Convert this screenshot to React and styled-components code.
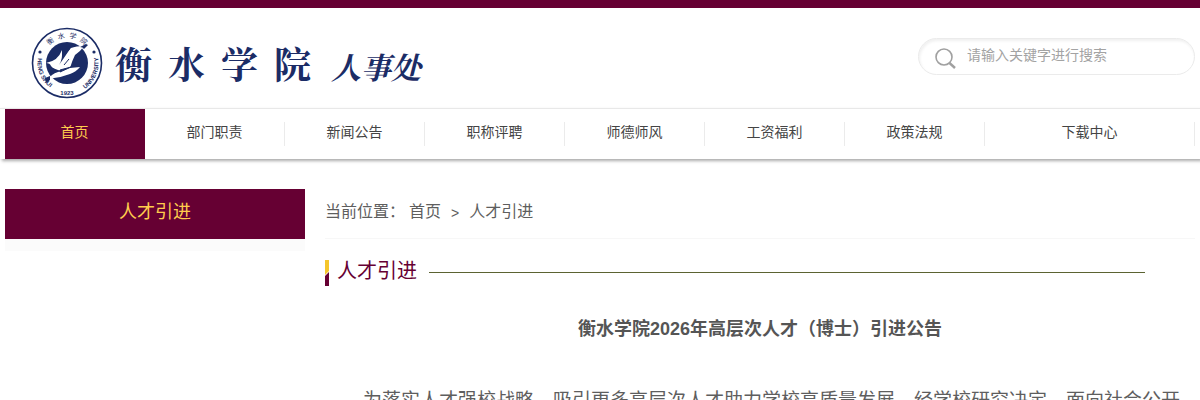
import React from 'react';
import styled, { createGlobalStyle } from 'styled-components';

const GlobalStyle = createGlobalStyle`
  * {
    box-sizing: border-box;
  }

  body {
    margin: 0;
    background: #fff;
    color: #5e5e5e;
    font: 14px/50px "Liberation Sans", "Noto Sans CJK SC", sans-serif;
  }

  a {
    color: inherit;
    text-decoration: none;
  }
`;

const Wrap = styled.div`
  max-width: 1190px;
  margin: 0 auto;
`;

const Header = styled.header`
  border-top: 8px solid #660033;
`;

const HeaderRow = styled(Wrap)`
  display: flex;
  justify-content: space-between;
  height: 100px;
`;

const Brand = styled.a`
  display: flex;
  align-items: center;
  padding: 10px 0 0 24px;
  color: #1b2c66;
  font-family: "Noto Serif CJK SC", "Noto Sans CJK SC", sans-serif;
  font-weight: bold;
`;

const BrandName = styled.span`
  display: flex;
  gap: ${props => (props.$small ? 0 : 16)}px;
  margin-left: ${props => (props.$small ? 20 : 10)}px;
  padding-top: ${props => (props.$small ? 6 : 0)}px;
  font-size: ${props => (props.$small ? 30 : 37)}px;
  font-style: ${props => (props.$small ? 'italic' : 'normal')};
`;

const Search = styled.form`
  display: flex;
  align-items: center;
  gap: 8px;
  width: 277px;
  height: 37px;
  margin-top: 30px;
  padding: 0 14px;
  border: 1px solid #ebebeb;
  border-radius: 19px;
  box-shadow: inset 1px 2px 3px #f0f0f0;
`;

const SearchButton = styled.button`
  display: flex;
  padding: 4px 0 0;
  border: 0;
  background: none;
`;

const SearchInput = styled.input`
  flex: 1;
  min-width: 0;
  height: 34px;
  padding: 0 2px 4px;
  border: 0;
  outline: 0;
  background: none;
  font: 14px "Liberation Sans", "Noto Sans CJK SC", sans-serif;

  &::placeholder {
    color: #a3a3a3;
  }
`;

const Nav = styled.nav`
  border-top: 1px solid #e8e8e8;
  box-shadow: 2px 2px 3px #aaa;
`;

const NavList = styled(Wrap)`
  display: flex;
`;

const NavItem = styled.a`
  display: flex;
  flex: ${props => (props.$wide ? 3 : 2)};
  align-items: center;
  height: 50px;
  background: ${props => (props.$active ? '#660033' : 'none')};
  color: ${props => (props.$active ? '#ffcc4d' : '#444')};

  span {
    flex: 1;
    height: 24px;
    border-right: 1px solid ${props => (props.$active ? '#660033' : '#ebebeb')};
    line-height: 20px;
    text-align: center;
  }
`;

const Main = styled(Wrap)`
  display: flex;
  gap: 20px;
  padding-top: 30px;
`;

const Side = styled.aside`
  flex: 0 0 300px;
`;

const SideTitle = styled.h2`
  margin: 0;
  background: #660033;
  color: #ffcc4d;
  font-size: 18px;
  font-weight: normal;
  line-height: 46px;
  height: 50px;
  text-align: center;
`;

const SideList = styled.div`
  padding: 6px;
  background: #fbfbfb;
`;

const Content = styled.main`
  flex: 1;
  min-width: 0;
`;

const Crumbs = styled.div`
  display: flex;
  height: 50px;
  border-bottom: 1px solid #f7f7f7;
  font-size: 16px;
  line-height: 46px;
`;

const Arrow = styled.span`
  margin: 0 10px;
  font-size: 14px;
  line-height: 48px;
`;

const CrumbLink = styled.a`
  margin-left: ${props => (props.$first ? 4 : 0)}px;
`;

const Heading = styled.div`
  display: flex;
  align-items: center;
  gap: 12px;
  margin: 20px 50px 0 0;

  &::after {
    content: '';
    flex: 1;
    border-bottom: 1px solid #5b6332;
    padding-bottom: 1px;
    margin-bottom: 2px;
  }
`;

const HeadingText = styled.h3`
  display: flex;
  align-items: center;
  gap: 8px;
  margin: 0;
  color: #660033;
  font-size: 20px;
  font-weight: normal;
  line-height: 24px;

  span {
    padding-bottom: 4px;
  }
`;

const ArticleTitle = styled.h1`
  margin: 29px 0 0;
  color: #555;
  font-size: 18px;
  line-height: 26px;
  text-align: center;
`;

const Paragraph = styled.p`
  margin: 41px 0 0;
  font-size: 19px;
  line-height: 36px;
  text-indent: 2em;
`;

const menu = ['首页', '部门职责', '新闻公告', '职称评聘', '师德师风', '工资福利', '政策法规', '下载中心'];

function Emblem() {
  return (
    <svg width="76" height="72" viewBox="-38 -36 76 72" fill="#1b2c66">
      <defs>
        <path id="ringTop" d="M-25 0A25 25 0 0 1 25 0" />
        <path id="ringLeft" d="M-29 -5A29.5 29.5 0 0 0 -11 27.5" />
        <path id="ringRight" d="M18 26A32 32 0 0 0 31 -6" />
      </defs>
      <circle r="34.5" fill="#fff" stroke="#1b2c66" strokeWidth="1.6" />
      <circle r="21" />
      {/* bird */}
      <path fill="#fff" d="M-21 0Q-9 -2 -5 -13L-5 -4Q-1 -10 4 -15Q9 -17 17 -17Q13 -11 8 -8Q5 -2 3 5L13 4Q9 9 3 11Q-5 14 -13 15L-19 17Q-16 11 -9 9L-5 8Q-14 6 -16 3Q-17 0 -21 0Z" />
      <path d="M-5 -13Q-4 -4 -8 2Q-3 -5 3 -14L-5 -18Z" />
      <path d="M-3 2L2 -4M-7 7L4 4L-7 9Z" stroke="#1b2c66" strokeWidth="1" />
      <path fill="#fff" d="M12 -16L20 -21L17 -15Z" />
      <path d="M13 -16L19 -19L21 -18L17 -14Q16 -16 13 -16Z" />
      <path d="M-22 15L-17 13L-17 17L-21 20Z" />
      <circle cx="-27" cy="-11" r="1.6" />
      <circle cx="27" cy="-11" r="1.6" />
      <g fontFamily="Liberation Sans, Noto Sans CJK SC, sans-serif" fontWeight="bold" fontSize="6">
        <text fontSize="7" fontWeight="normal" textAnchor="middle">
          <textPath href="#ringTop" startOffset="50%">衡&#160; 水&#160; 学&#160; 院</textPath>
        </text>
        <text><textPath href="#ringLeft">HENG SHUI</textPath></text>
        <text><textPath href="#ringRight">UNIVERSITY</textPath></text>
        <text x="0" y="32" fontSize="6" textAnchor="middle">1923</text>
      </g>
    </svg>
  );
}

export default function App() {
  return (
    <>
      <GlobalStyle />
      <Header>
        <HeaderRow>
          <Brand href="#">
            <Emblem />
            <BrandName>{[...'衡水学院'].map(c => <span key={c}>{c}</span>)}</BrandName>
            <BrandName $small>人事处</BrandName>
          </Brand>
          <Search>
            <SearchButton type="button" aria-label="搜索">
              <svg width="24" height="24" viewBox="0 0 24 24" fill="none" stroke="#a0a0a0">
                <circle cx="11" cy="10" r="8" strokeWidth="1.6" />
                <path d="M16.5 16L22 21" strokeWidth="2.4" />
              </svg>
            </SearchButton>
            <SearchInput type="text" aria-label="搜索" placeholder="请输入关键字进行搜索" />
          </Search>
        </HeaderRow>
      </Header>
      <Nav>
        <NavList>
          {menu.map((name, i) => (
            <NavItem key={name} href="#" $active={i === 0} $wide={i === menu.length - 1}>
              <span>{name}</span>
            </NavItem>
          ))}
        </NavList>
      </Nav>
      <Main>
        <Side>
          <SideTitle>人才引进</SideTitle>
          <SideList />
        </Side>
        <Content>
          <Crumbs>
            当前位置：
            <CrumbLink $first href="#">首页</CrumbLink>
            <Arrow>&gt;</Arrow>
            <CrumbLink href="#">人才引进</CrumbLink>
          </Crumbs>
          <Heading>
            <HeadingText>
              <svg width="4" height="26" viewBox="0 0 4 26">
                <path d="M0 0H4V11L0 15Z" fill="#f5c62c" />
                <path d="M4 12V26H0V16Z" fill="#660033" />
              </svg>
              <span>人才引进</span>
            </HeadingText>
          </Heading>
          <ArticleTitle>衡水学院2026年高层次人才（博士）引进公告</ArticleTitle>
          <Paragraph>
            为落实人才强校战略，吸引更多高层次人才助力学校高质量发展，经学校研究决定，面向社会公开
          </Paragraph>
        </Content>
      </Main>
    </>
  );
}
